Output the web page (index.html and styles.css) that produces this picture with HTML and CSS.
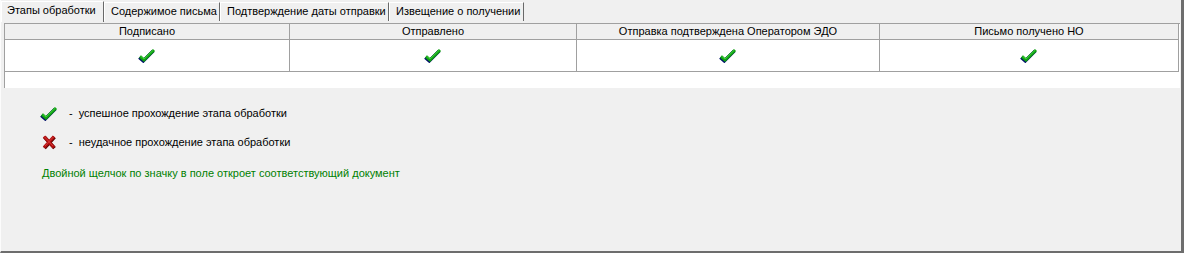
FILE: index.html
```html
<!DOCTYPE html>
<html lang="ru">
<head>
<meta charset="utf-8">
<link rel="stylesheet" href="styles.css">
</head>
<body>
<div class="window">
  <div class="tabs">
    <div class="tab active" style="width:103px">Этапы обработки</div>
    <div class="tab" style="width:116px">Содержимое письма</div>
    <div class="tab" style="width:169px">Подтверждение даты отправки</div>
    <div class="tab" style="width:135px">Извещение о получении</div>
  </div>
  <div class="gridarea">
    <div class="table">
      <div class="row head">
        <div class="cell c1">Подписано</div>
        <div class="cell c2">Отправлено</div>
        <div class="cell c3">Отправка подтверждена Оператором ЭДО</div>
        <div class="cell c4">Письмо получено НО</div>
      </div>
      <div class="row data">
        <div class="cell c1"><svg class="check" viewBox="0 0 18 16" width="18" height="16"><path d="M2 9.5 L6 13 L16 3" fill="none" stroke="#00106a" stroke-width="3.4" transform="translate(-0.7,0.9)"/><path d="M2 9.5 L6 13 L16 3" fill="none" stroke="#12a012" stroke-width="3"/><path d="M2.6 9.2 L6 12 L15.2 3.2" fill="none" stroke="#3cd43c" stroke-width="1"/></svg></div>
        <div class="cell c2"><svg class="check" viewBox="0 0 18 16" width="18" height="16"><path d="M2 9.5 L6 13 L16 3" fill="none" stroke="#00106a" stroke-width="3.4" transform="translate(-0.7,0.9)"/><path d="M2 9.5 L6 13 L16 3" fill="none" stroke="#12a012" stroke-width="3"/><path d="M2.6 9.2 L6 12 L15.2 3.2" fill="none" stroke="#3cd43c" stroke-width="1"/></svg></div>
        <div class="cell c3"><svg class="check" viewBox="0 0 18 16" width="18" height="16"><path d="M2 9.5 L6 13 L16 3" fill="none" stroke="#00106a" stroke-width="3.4" transform="translate(-0.7,0.9)"/><path d="M2 9.5 L6 13 L16 3" fill="none" stroke="#12a012" stroke-width="3"/><path d="M2.6 9.2 L6 12 L15.2 3.2" fill="none" stroke="#3cd43c" stroke-width="1"/></svg></div>
        <div class="cell c4"><svg class="check" viewBox="0 0 18 16" width="18" height="16"><path d="M2 9.5 L6 13 L16 3" fill="none" stroke="#00106a" stroke-width="3.4" transform="translate(-0.7,0.9)"/><path d="M2 9.5 L6 13 L16 3" fill="none" stroke="#12a012" stroke-width="3"/><path d="M2.6 9.2 L6 12 L15.2 3.2" fill="none" stroke="#3cd43c" stroke-width="1"/></svg></div>
      </div>
    </div>
  </div>
  <div class="legend">
    <div class="legend-row">
      <svg class="icon" viewBox="0 0 18 16" width="18" height="16"><path d="M2 9.5 L6 13 L16 3" fill="none" stroke="#00106a" stroke-width="3.4" transform="translate(-0.7,0.9)"/><path d="M2 9.5 L6 13 L16 3" fill="none" stroke="#12a012" stroke-width="3"/><path d="M2.6 9.2 L6 12 L15.2 3.2" fill="none" stroke="#3cd43c" stroke-width="1"/></svg>
      <span class="dash">-</span><span>успешное прохождение этапа обработки</span>
    </div>
    <div class="legend-row">
      <svg class="icon" viewBox="0 0 18 16" width="18" height="16"><path d="M4 2.5 L14 13.5 M14 2.5 L4 13.5" fill="none" stroke="#5a0000" stroke-width="3.6" transform="translate(0.5,0.6)"/><path d="M4 2.5 L14 13.5 M14 2.5 L4 13.5" fill="none" stroke="#b01010" stroke-width="3.2"/><path d="M4.5 2.8 L13 12 M13.5 2.8 L5 12" fill="none" stroke="#e04040" stroke-width="0.8"/></svg>
      <span class="dash">-</span><span>неудачное прохождение этапа обработки</span>
    </div>
    <div class="hint">Двойной щелчок по значку в поле откроет соответствующий документ</div>
  </div>
</div>
</body>
</html>
```
FILE: styles.css
```css
html, body {
  margin: 0;
  padding: 0;
}
body {
  width: 1184px;
  height: 253px;
  background: #f0f0f0;
  font-family: "Liberation Sans", Arial, sans-serif;
  font-size: 11px;
  color: #000;
  overflow: hidden;
}
.window {
  box-sizing: border-box;
  width: 1184px;
  height: 253px;
  border-right: 3px solid #6d6d6d;
  border-bottom: 2px solid #6d6d6d;
  border-left: 1px solid #fcfcfc;
  position: relative;
}
.tabs {
  display: flex;
  height: 22px;
  padding-top: 2px;
  box-sizing: border-box;
}
.tab {
  box-sizing: border-box;
  height: 19px;
  padding-left: 6px;
  line-height: 17px;
  font-size: 11px;
  border-right: 1px solid #696969;
  border-left: 1px solid #ffffff;
  border-top: 1px solid #ffffff;
  white-space: nowrap;
}
.tab.active {
  padding-left: 5px;
  margin-top: -1px;
  height: 21px;
}
.gridarea {
  margin-top: 1px;
  margin-left: 3px;
  width: 1176px;
  height: 65px;
  background: #ffffff;
  border-left: 1px solid #a0a0a0;
  border-top: 1px solid #a0a0a0;
  box-sizing: border-box;
}
.table {
  width: 1174px;
  border-right: 1px solid #a0a0a0;
  border-bottom: 1px solid #a0a0a0;
  box-sizing: border-box;
}
.row {
  display: grid;
  grid-template-columns: 285px 287px 303px 1fr;
}
.head {
  background: #f0f0f0;
  height: 16px;
  border-bottom: 1px solid #a0a0a0;
  box-sizing: border-box;
}
.head .cell {
  line-height: 15px;
  text-align: center;
  border-right: 1px solid #a0a0a0;
}
.head .c4 { border-right: none; }
.data {
  height: 31px;
}
.data .cell {
  display: flex;
  justify-content: center;
  align-items: center;
  border-right: 1px solid #a0a0a0;
}
.data .c4 { border-right: none; }
.check {
  display: block;
  margin-top: -1px;
}
.legend {
  padding-left: 39px;
  padding-top: 16px;
}
.legend-row {
  display: flex;
  align-items: center;
  height: 18px;
  margin-bottom: 11px;
}
.legend-row .icon {
  display: block;
  margin-right: 11px;
}
.dash {
  margin-right: 6px;
}
.hint {
  color: #008000;
  margin-left: 2px;
  margin-top: 16px;
}
```
